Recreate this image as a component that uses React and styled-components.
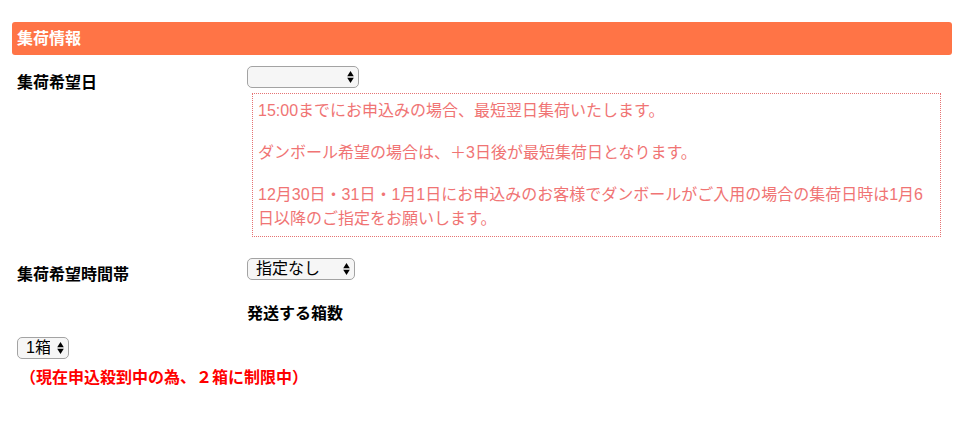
import React from 'react';
import styled, { createGlobalStyle } from 'styled-components';

const GlobalStyle = createGlobalStyle`
  body {
    margin: 0;
    background: #fff;
    font-family: "Liberation Sans", "Noto Sans CJK JP", sans-serif;
    color: #000;
  }
`;

const notes = [
  '15:00までにお申込みの場合、最短翌日集荷いたします。',
  'ダンボール希望の場合は、＋3日後が最短集荷日となります。',
  '12月30日・31日・1月1日にお申込みのお客様でダンボールがご入用の場合の集荷日時は1月6日以降のご指定をお願いします。',
];

function SelectBox({ width, options = [''] }) {
  return (
    <SelectWrap $width={width}>
      <NativeSelect defaultValue={options[0]}>
        {options.map((o) => (
          <option key={o} value={o}>{o}</option>
        ))}
      </NativeSelect>
      <Arrows viewBox="0 0 7 12" width="7" height="12">
        <polygon points="0.2,5.2 3.5,0 6.8,5.2" />
        <polygon points="0.2,6.8 6.8,6.8 3.5,12" />
      </Arrows>
    </SelectWrap>
  );
}

function App() {
  return (
    <>
      <GlobalStyle />
      <Page>
        <SectionHeader>集荷情報</SectionHeader>

        <FormRow $mt={11}>
          <Label>集荷希望日</Label>
          <Field>
            <SelectBox width={112} />
            <NoteBox>
              {notes.map((n) => (
                <Note key={n}>{n}</Note>
              ))}
            </NoteBox>
          </Field>
        </FormRow>

        <FormRow $mt={21}>
          <Label>集荷希望時間帯</Label>
          <Field>
            <SelectBox width={108} options={['指定なし', '午前中', '12時〜14時', '14時〜16時', '16時〜18時']} />
          </Field>
        </FormRow>

        <SubHeading>発送する箱数</SubHeading>

        <BoxCount>
          <SelectBox width={52} options={['1箱', '2箱']} />
          <LimitNote>（現在申込殺到中の為、２箱に制限中）</LimitNote>
        </BoxCount>
      </Page>
    </>
  );
}

const Page = styled.div`
  padding: 22px 22px 0 12px;
`;

const SectionHeader = styled.h2`
  margin: 0;
  height: 33px;
  line-height: 33px;
  padding-left: 5px;
  border-radius: 3px;
  background-color: #ff7446;
  color: #fff;
  font-size: 16px;
  font-weight: bold;
`;

const FormRow = styled.div`
  display: flex;
  align-items: flex-start;
  margin-top: ${(p) => p.$mt}px;
`;

const Label = styled.div`
  width: 235px;
  flex-shrink: 0;
  box-sizing: border-box;
  padding: 7px 0 0 5px;
  font-size: 16px;
  line-height: 20px;
  font-weight: bold;
`;

const Field = styled.div`
  flex: 1;
  min-width: 0;
`;

const SelectWrap = styled.div`
  position: relative;
  width: ${(p) => p.$width}px;
  height: 22px;
`;

const NativeSelect = styled.select`
  appearance: none;
  -webkit-appearance: none;
  display: block;
  width: 100%;
  height: 22px;
  box-sizing: border-box;
  margin: 0;
  padding: 0 18px 0 8px;
  border: 1px solid #a3a3a3;
  border-radius: 5px;
  background-color: #f6f6f6;
  color: #000;
  font-family: "Liberation Sans", "Noto Sans CJK JP", sans-serif;
  font-size: 16px;
  line-height: 20px;
  outline: none;
`;

const Arrows = styled.svg`
  position: absolute;
  right: 5px;
  top: 50%;
  transform: translateY(-50%);
  fill: #000;
  pointer-events: none;
`;

const NoteBox = styled.div`
  margin: 5px 11px 0 5px;
  padding: 5px;
  border: 1px dotted #e57373;
  color: #f07474;
  font-size: 16px;
  line-height: 24px;
`;

const Note = styled.p`
  margin: 0;

  & + & {
    margin-top: 18px;
  }
`;

const SubHeading = styled.div`
  margin-top: 19px;
  padding-left: 235px;
  font-size: 16px;
  line-height: 20px;
  font-weight: bold;
`;

const BoxCount = styled.div`
  margin-top: 13px;
  padding-left: 5px;
`;

const LimitNote = styled.div`
  margin: 9px 0 0 3px;
  color: #ff0000;
  font-size: 16px;
  line-height: 20px;
  font-weight: bold;
`;

export default App;
